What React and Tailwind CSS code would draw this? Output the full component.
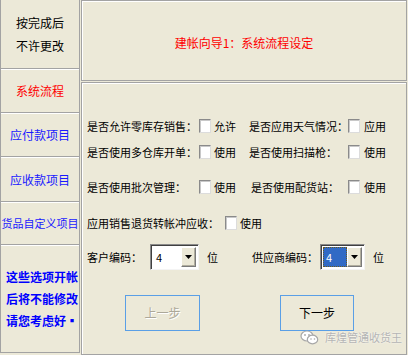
import React from "react";

const font = { fontFamily: '"Noto Sans CJK SC", "Noto Sans", sans-serif' };

function Check() {
  return (
    <span className="inline-block w-[12px] h-[14px] bg-white border border-t-[#8a8a8a] border-l-[#8a8a8a] border-r-[#dcdcdc] border-b-[#dcdcdc] shadow-[inset_1px_1px_0_#c8c8c8] shrink-0" />
  );
}

function Arrow() {
  return (
    <span className="flex items-center justify-center w-[15px] h-full bg-[#ECE9D8] border border-t-white border-l-white border-r-[#7a7a7a] border-b-[#7a7a7a] shadow-[inset_-1px_-1px_0_#b0ad9e]">
      <svg width="7" height="4" viewBox="0 0 7 4">
        <polygon points="0,0 7,0 3.5,4" fill="#000" />
      </svg>
    </span>
  );
}

function Combo({ selected, className }) {
  return (
    <div className={"flex h-[26px] bg-white border border-t-[#8a8a8a] border-l-[#8a8a8a] border-r-[#f4f4f4] border-b-[#f4f4f4] shadow-[inset_1px_1px_0_#404040] p-[2px] pl-[2px] " + className}>
      <div className="flex-1 flex items-center">
        {selected ? (
          <span className="flex items-center h-[20px] w-full border border-dotted border-[#6b5a20] bg-[#316AC5] text-white pl-[2px] text-[11px] leading-none">4</span>
        ) : (
          <span className="pl-[3px] text-[11px] leading-none">4</span>
        )}
      </div>
      <Arrow />
    </div>
  );
}

export default function App() {
  return (
    <div className="relative w-[408px] h-[355px] bg-[#ECE9D8] flex text-[11px] text-black overflow-hidden" style={font}>
      {/* Left column */}
      <div className="w-[80px] h-[353px] flex flex-col border-x border-x-[#a3a3a3] border-b border-b-[#a3a3a3]">
        <div className="h-[69px] flex flex-col items-center justify-center border-b border-b-[#a3a3a3] text-[12px] leading-[23px]">
          <span>按完成后</span>
          <span>不许更改</span>
        </div>
        <div className="h-[44px] flex items-center justify-center border-t border-t-white border-b border-b-[#a3a3a3] text-[12px] text-[#ff0000]">
          系统流程
        </div>
        <div className="h-[44px] flex items-center justify-center border-t border-t-white border-b border-b-[#a3a3a3] text-[12px] text-[#1a1aff]">
          应付款项目
        </div>
        <div className="h-[45px] flex items-center justify-center border-t border-t-white border-b border-b-[#a3a3a3] text-[12px] text-[#1a1aff]">
          应收款项目
        </div>
        <div className="h-[43px] flex items-center justify-center border-t border-t-white border-b border-b-[#a3a3a3] text-[11px] text-[#1a1aff] whitespace-nowrap">
          货品自定义项目
        </div>
        <div className="flex-1 flex flex-col justify-center pl-[5px] border-t border-t-white text-[12px] font-bold text-[#0000ff] leading-[22px] whitespace-nowrap">
          <span>这些选项开帐</span>
          <span>后将不能修改</span>
          <span>请您考虑好▪</span>
        </div>
      </div>

      {/* Right column */}
      <div className="ml-[1px] flex-1 flex flex-col gap-[1px] pr-[1px]">
        <div className="h-[81px] border border-[#a3a3a3] shadow-[inset_1px_1px_0_#fff] flex items-center justify-center pt-[5px]">
          <span className="text-[12px] text-[#ff0000]">建帐向导1：系统流程设定</span>
        </div>
        <div className="flex-1 border border-[#a3a3a3] shadow-[inset_1px_1px_0_#fff] pl-[5px] flex flex-col">
          {/* row 1 */}
          <div className="mt-[35px] h-[16px] flex items-center">
            <div className="w-[162px] flex items-center">
              <span className="w-[112px] whitespace-nowrap">是否允许零库存销售：</span>
              <Check />
              <span className="ml-[3px]">允许</span>
            </div>
            <div className="flex items-center">
              <span className="w-[99px] whitespace-nowrap">是否应用天气情况：</span>
              <Check />
              <span className="ml-[4px]">应用</span>
            </div>
          </div>
          {/* row 2 */}
          <div className="mt-[10px] h-[16px] flex items-center">
            <div className="w-[162px] flex items-center">
              <span className="w-[112px] whitespace-nowrap">是否使用多仓库开单：</span>
              <Check />
              <span className="ml-[3px]">使用</span>
            </div>
            <div className="flex items-center">
              <span className="w-[99px] whitespace-nowrap">是否使用扫描枪：</span>
              <Check />
              <span className="ml-[4px]">使用</span>
            </div>
          </div>
          {/* row 3 */}
          <div className="mt-[19px] h-[16px] flex items-center">
            <div className="w-[162px] flex items-center">
              <span className="w-[112px] whitespace-nowrap">是否使用批次管理：</span>
              <Check />
              <span className="ml-[3px]">使用</span>
            </div>
            <div className="flex items-center">
              <span className="w-[99px] pl-[2px] whitespace-nowrap">是否使用配货站：</span>
              <Check />
              <span className="ml-[4px]">使用</span>
            </div>
          </div>
          {/* row 4 */}
          <div className="mt-[20px] h-[16px] flex items-center">
            <span className="w-[138px] whitespace-nowrap">应用销售退货转帐冲应收：</span>
            <Check />
            <span className="ml-[3px]">使用</span>
          </div>
          {/* row 5 */}
          <div className="mt-[13px] h-[26px] flex items-center">
            <span className="w-[63px] whitespace-nowrap">客户编码：</span>
            <Combo className="w-[49px]" />
            <span className="ml-[8px]">位</span>
            <span className="ml-[34px] w-[68px] whitespace-nowrap">供应商编码：</span>
            <Combo selected className="w-[45px]" />
            <span className="ml-[8px]">位</span>
          </div>
          {/* buttons */}
          <div className="mt-[25px] flex">
            <button className="ml-[38px] w-[75px] h-[36px] border border-[#5a9fe6] bg-[#ECE9D8] text-[12px] text-[#aca899] [text-shadow:1px_1px_0_#fff]">
              上一步
            </button>
            <button className="ml-[80px] w-[74px] h-[36px] border border-[#5a9fe6] bg-[#ECE9D8] text-[12px] text-black">
              下一步
            </button>
          </div>
        </div>
      </div>

      {/* watermark overlay */}
      <div className="absolute left-[300px] top-[329px] flex items-center gap-[6px] text-[11px] text-[#b4b4b4] [text-shadow:0_0_2px_#fff]">
        <svg width="19" height="15" viewBox="0 0 19 15">
          <ellipse cx="7" cy="6" rx="6" ry="5" fill="#fff" stroke="#a8a8a8" strokeWidth="1.2" />
          <ellipse cx="12.5" cy="9.5" rx="5.2" ry="4.3" fill="#fff" stroke="#a8a8a8" strokeWidth="1.2" />
          <circle cx="5" cy="5" r="0.9" fill="#a8a8a8" />
          <circle cx="9" cy="5" r="0.9" fill="#a8a8a8" />
          <circle cx="11" cy="9" r="0.8" fill="#a8a8a8" />
          <circle cx="14.5" cy="9" r="0.8" fill="#a8a8a8" />
        </svg>
        <span className="whitespace-nowrap">库煌管通收货王</span>
      </div>
    </div>
  );
}
